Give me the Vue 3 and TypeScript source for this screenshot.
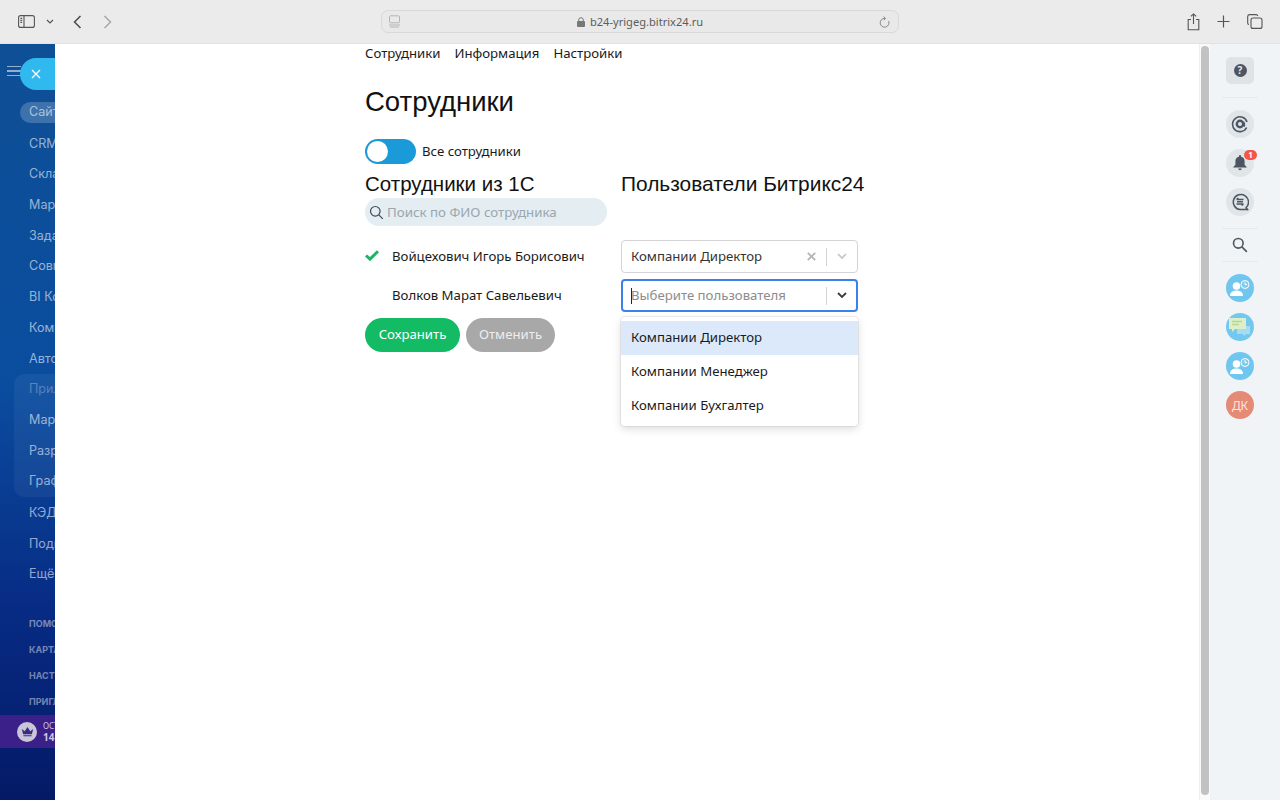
<script setup lang="ts">
const groupA: string[] = ['CRM', 'Склад', 'Маркетинг', 'Задачи', 'Совместная', 'BI Конструктор', 'Компания', 'Автоматизация']
const groupB: string[] = ['Маркет', 'Разработчикам', 'Графики']
const groupC: string[] = ['КЭДО', 'Подписка', 'Ещё...']
const smalls: string[] = ['ПОМОЩЬ', 'КАРТА САЙТА', 'НАСТРОИТЬ', 'ПРИГЛАСИТЬ']
const options: string[] = ['Компании Директор', 'Компании Менеджер', 'Компании Бухгалтер']
</script>

<template>
  <div class="window">
    <header class="toolbar">
      <div class="tb-left">
        <svg width="17" height="13" viewBox="0 0 17 13" fill="none" stroke="#555" stroke-width="1.1"><rect x=".6" y=".6" width="15.8" height="11.8" rx="2"/><path d="M6 .6v11.8M2.4 3.4h1.8M2.4 5.4h1.8M2.4 7.4h1.8"/></svg>
        <svg class="tb-caret" width="8" height="5" viewBox="0 0 8 5" fill="none" stroke="#555" stroke-width="1.2"><path d="M1 1l3 3 3-3"/></svg>
        <svg class="tb-back" width="9" height="14" viewBox="0 0 9 14" fill="none" stroke="#4a4a4a" stroke-width="1.5"><path d="M7.5 1L1.5 7l6 6"/></svg>
        <svg class="tb-fwd" width="9" height="14" viewBox="0 0 9 14" fill="none" stroke="#a8a8a8" stroke-width="1.5"><path d="M1.5 1l6 6-6 6"/></svg>
      </div>
      <div class="address">
        <svg class="addr-site" width="13" height="13" viewBox="0 0 13 13" fill="none" stroke="#b4b4b4" stroke-width="1"><rect x="1.5" y=".8" width="10" height="7" rx="1"/><path d="M1 10h11M2 12h9"/></svg>
        <span class="addr-url">
          <svg width="8" height="10" viewBox="0 0 8 10"><path d="M1.7 4.4V3a2.3 2.3 0 014.6 0v1.4" fill="none" stroke="#777" stroke-width="1"/><rect y="4" width="8" height="6" rx="1" fill="#777"/></svg>
          b24-yrigeg.bitrix24.ru
        </span>
        <svg class="addr-reload" width="11" height="12" viewBox="0 0 11 12" fill="none" stroke="#8a8a8a" stroke-width="1"><path d="M9.6 5a4.4 4.4 0 11-3.6-2.6"/><path d="M4.6.6L6.6 2.4 4.8 4.2"/></svg>
      </div>
      <div class="tb-right">
        <svg width="13" height="18" viewBox="0 0 13 18" fill="none" stroke="#555" stroke-width="1.1"><path d="M4 6.5H1.2v10.3h10.6V6.5H9M6.5 11V1M3.8 3.4L6.5.9l2.7 2.5"/></svg>
        <svg width="13" height="13" viewBox="0 0 13 13" fill="none" stroke="#555" stroke-width="1.2"><path d="M6.5.5v12M.5 6.5h12"/></svg>
        <svg width="16" height="15" viewBox="0 0 16 15" fill="none" stroke="#555" stroke-width="1.1"><rect x="4" y="4" width="11" height="10.4" rx="2"/><path d="M2 10.5A1.5 1.5 0 01.7 9V2.5A2 2 0 012.7.6H9A1.8 1.8 0 0110.8 2"/></svg>
      </div>
    </header>

    <div class="body">
      <aside class="sidebar">
        <span class="burger"><i></i><i></i><i></i></span>
        <button class="close-pill" type="button" aria-label="Закрыть">
          <svg width="10" height="10" viewBox="0 0 10 10" stroke="#fff" stroke-width="1.4"><path d="M1 1l8 8M9 1l-8 8"/></svg>
        </button>
        <div class="menu">
          <div class="item active"><span>Сайты</span></div>
          <div v-for="t in groupA" :key="t" class="item"><span>{{ t }}</span></div>
          <div class="group">
            <div class="item dim"><span>Приложения</span></div>
            <div v-for="t in groupB" :key="t" class="item"><span>{{ t }}</span></div>
          </div>
          <div v-for="t in groupC" :key="t" class="item"><span>{{ t }}</span></div>
        </div>
        <div class="smalls">
          <div v-for="t in smalls" :key="t" class="small">{{ t }}</div>
        </div>
        <div class="promo">
          <span class="crown">
            <svg width="16" height="13" viewBox="0 0 16 13" fill="#3b2a86"><path d="M1 3.5l3.6 2.8L8 1l3.4 5.3L15 3.5 13.4 10H2.6zM3 11h10v1.4H3z"/></svg>
          </span>
          <span class="promo-text"><small>ОСТАЛОСЬ</small><b>14 дней</b></span>
        </div>
      </aside>

      <main class="main">
        <div class="content">
          <nav class="tabs">
            <span>Сотрудники</span><span>Информация</span><span>Настройки</span>
          </nav>
          <h1>Сотрудники</h1>
          <div class="toggle-row">
            <span class="toggle"><i></i></span>
            <span>Все сотрудники</span>
          </div>
          <div class="columns">
            <section class="col-left">
              <h2>Сотрудники из 1С</h2>
              <div class="search">
                <svg width="15" height="15" viewBox="0 0 15 15" fill="none" stroke="#3d4a52" stroke-width="1.2"><circle cx="6.3" cy="6.3" r="4.8"/><path d="M9.8 9.8l4 4"/></svg>
                <span>Поиск по ФИО сотрудника</span>
              </div>
              <div class="person first">
                <svg class="check" width="14" height="11" viewBox="0 0 14 11" fill="none" stroke="#1eb463" stroke-width="3"><path d="M1 5.5l4 3.6L13 1.2"/></svg>
                <span>Войцехович Игорь Борисович</span>
              </div>
              <div class="person">
                <span>Волков Марат Савельевич</span>
              </div>
            </section>
            <section class="col-right">
              <h2>Пользователи Битрикс24</h2>
              <div class="select filled">
                <span class="value">Компании Директор</span>
                <svg class="clear" width="9" height="9" viewBox="0 0 9 9" stroke="#b5b5b5" stroke-width="1.8"><path d="M.8.8l7.4 7.4M8.2.8L.8 8.2"/></svg>
                <i class="sep"></i>
                <svg class="arrow" width="10" height="7" viewBox="0 0 10 7" fill="none" stroke="#c4c4c4" stroke-width="1.6"><path d="M1 1l4 4 4-4"/></svg>
              </div>
              <div class="select focus">
                <i class="caret"></i>
                <span class="placeholder">Выберите пользователя</span>
                <i class="sep"></i>
                <svg class="arrow" width="10" height="7" viewBox="0 0 10 7" fill="none" stroke="#3c3c3c" stroke-width="1.8"><path d="M1 1l4 4 4-4"/></svg>
                <ul class="dropdown">
                  <li v-for="(o, i) in options" :key="o" :class="{ hot: i === 0 }">{{ o }}</li>
                </ul>
              </div>
            </section>
          </div>
          <div class="actions">
            <button class="btn save" type="button">Сохранить</button>
            <button class="btn cancel" type="button">Отменить</button>
          </div>
        </div>
      </main>

      <div class="scrolltrack"><div class="thumb"></div></div>

      <aside class="rail">
        <div class="help">
          <span class="help-dot">?</span>
        </div>
        <hr />
        <div class="round">
          <svg width="18" height="18" viewBox="0 0 18 18" fill="none" stroke="#4d5563" stroke-width="1.6"><path d="M15.6 12.5A7.4 7.4 0 1116 7"/><circle cx="9" cy="9" r="3.2" stroke-width="2.4"/><path d="M12.5 6.5a5 5 0 01.6 5.2" stroke-width="1.2"/></svg>
        </div>
        <div class="round">
          <svg width="14" height="16" viewBox="0 0 14 16" fill="#4d5563"><path d="M7 0a1 1 0 011 1v.7A4.6 4.6 0 0111.6 6.200v3.6L14 12.500H0l2.400-2.700V6.200A4.600 4.600 0 016 1.700V1a1 1 0 011-1zM5.200 13.500h3.600a1.800 1.800 0 01-3.600 0z"/></svg>
          <span class="badge">1</span>
        </div>
        <div class="round">
          <svg width="18" height="18" viewBox="0 0 18 18" fill="none" stroke="#4d5563" stroke-width="1.5"><path d="M16.800 16.800L15 14.700A7.600 7.600 0 109 16.600h7.800z" stroke-linejoin="round"/><path d="M5.500 6.500h7M5.500 6.500L7.300 5M12.500 11h-7M12.500 11l-1.800 1.500M6 8.700h6"/></svg>
        </div>
        <hr />
        <div class="round plain">
          <svg width="16" height="16" viewBox="0 0 16 16" fill="none" stroke="#4d5563" stroke-width="1.600"><circle cx="6.300" cy="6.300" r="4.800"/><path d="M9.900 9.900l5 5"/></svg>
        </div>
        <hr />
        <div class="round user">
          <svg width="22" height="18" viewBox="0 0 22 18"><circle cx="7.500" cy="7" r="3.800" fill="#fff"/><path d="M1 17c0-4 3-5.500 6.500-5.500S14 13 14 17z" fill="#fff"/><circle cx="16" cy="5.500" r="4" fill="#7dcdf0" stroke="#fff"/><path d="M16 3.300v2.200h2" fill="none" stroke="#fff"/></svg>
        </div>
        <div class="round chat">
          <svg width="24" height="20" viewBox="0 0 24 20"><path d="M9 9h13v8H18l-2 2-1-2H9z" fill="#a6dcf2"/><path d="M1 1h17v11H7l-3 3v-3H1z" fill="#dcefc9"/><path d="M4 4.500h10M4 7.500h7" stroke="#b9d68e" stroke-width="1.600"/></svg>
        </div>
        <div class="round user">
          <svg width="22" height="18" viewBox="0 0 22 18"><circle cx="7.500" cy="7" r="3.800" fill="#fff"/><path d="M1 17c0-4 3-5.500 6.500-5.500S14 13 14 17z" fill="#fff"/><circle cx="16" cy="5.500" r="4" fill="#7dcdf0" stroke="#fff"/><path d="M16 3.300v2.200h2" fill="none" stroke="#fff"/></svg>
        </div>
        <div class="round avatar">ДК</div>
      </aside>
    </div>
  </div>
</template>

<style>
html, body { margin: 0; background: #fff; overflow: hidden; }
</style>

<style scoped>
.window { width: 1280px; height: 800px; display: flex; flex-direction: column; overflow: hidden; font-family: "Noto Sans", "Open Sans", sans-serif; color: #1a1a1a; }
.toolbar { height: 44px; flex: none; background: #ebebeb; border-bottom: 1px solid #e2e2e2; box-sizing: border-box; display: flex; align-items: center; position: relative; padding: 0 17px 0 18px; justify-content: space-between; }
.tb-left { display: flex; align-items: center; }
.tb-caret { margin-left: 11px; }
.tb-back { margin-left: 19px; }
.tb-fwd { margin-left: 21px; }
.address { width: 518px; height: 23px; box-sizing: border-box; border: 1px solid #d9d9d9; border-radius: 7px; background: #e9e9e9; display: flex; align-items: center; justify-content: space-between; padding: 0 8px 0 6px; margin-left: 269px; font-size: 11.1px; color: #5c5c5c; }
.addr-url { display: flex; align-items: center; gap: 5px; margin-left: 0; }
.tb-right { display: flex; align-items: center; gap: 17px; margin-left: auto; margin-right: 0; }
.body { flex: 1; display: flex; min-height: 0; }
.sidebar { width: 55px; flex: none; position: relative; overflow: hidden; box-sizing: border-box; padding-top: 54px; background: linear-gradient(180deg, #0e4f95 0%, #0a4d9f 45%, #072b84 75%, #041a66 100%); display: flex; flex-direction: column; }
.burger { position: absolute; left: 7px; top: 22px; width: 14px; display: flex; flex-direction: column; gap: 3px; }
.burger i { display: block; height: 1.4px; background: rgba(255,255,255,.55); }
.close-pill { position: absolute; left: 20px; top: 14px; width: 40px; height: 32px; border: 0; border-radius: 16px 0 0 16px; background: #2fb9ee; display: flex; align-items: center; padding: 0 0 0 11px; }
.menu { display: flex; flex-direction: column; }
.item { height: 30.7px; line-height: 30.700px; padding-left: 29px; font-size: 12.6px; color: rgba(255,255,255,.58); white-space: nowrap; font-family: Inter, "Noto Sans", sans-serif; }
.item.active { position: relative; }
.item.active::before { content: ""; position: absolute; left: 20px; top: 4px; width: 60px; height: 21px; border-radius: 11px; background: rgba(255,255,255,.2); }
.item.active span { position: relative; top: -1px; }
.item.dim { color: rgba(255,255,255,.28); }
.group { margin: 0 0 1px 14px; padding: 0; border-radius: 10px 0 0 10px; background: rgba(255,255,255,.05); }
.group .item { padding-left: 15px; }
.smalls { margin-top: 21px; display: flex; flex-direction: column; }
.small { height: 26px; line-height: 26px; padding-left: 29px; font-size: 9px; font-weight: 700; color: rgba(255,255,255,.45); white-space: nowrap; font-family: Inter, sans-serif; }
.promo { margin-top: 0; height: 33px; background: #3a2088; display: flex; align-items: center; padding-left: 17px; }
.crown { width: 20px; height: 20px; border-radius: 50%; background: #c9c6d8; flex: none; display: flex; align-items: center; justify-content: center; }
.crown svg { width: 13px; height: 11px; }
.promo-text { margin-left: 6px; display: flex; flex-direction: column; color: rgba(255,255,255,.75); white-space: nowrap; }
.promo-text small { font-size: 8px; line-height: 10px; }
.promo-text b { font-size: 10px; line-height: 12px; }
.main { flex: 1; min-width: 0; background: #fff; overflow: hidden; }
.content { margin-left: 310px; width: 520px; font-size: 13.2px; }
.tabs { display: flex; gap: 14px; font-size: 13.2px; line-height: 19px; height: 20px; color: #1a1a1a; }
h1 { margin: 21px 0 0 0; font: 400 27.5px/34px "Liberation Sans", Arial, sans-serif; color: #111; height: 34px; }
.toggle-row { margin-top: 20px; height: 24px; display: flex; align-items: center; gap: 6px; font-size: 13.2px; }
.toggle { width: 51px; height: 25px; border-radius: 13px; background: #1b9ad9; position: relative; flex: none; }
.toggle i { position: absolute; left: 2px; top: 2px; width: 21px; height: 21px; border-radius: 50%; background: #fff; }
.columns { display: flex; gap: 14px; margin-top: 7px; }
h2 { margin: 0; font: 400 20.5px/28px "Liberation Sans", Arial, sans-serif; color: #111; white-space: nowrap; }
.col-right h2 { font-size: 20.9px; }
.col-left { width: 242px; flex: none; }
.col-right { width: 237px; flex: none; }
.search { height: 28px; border-radius: 14px; background: #e3edf2; display: flex; align-items: center; gap: 3px; padding-left: 4px; font-size: 13.3px; color: #9aa7ae; }
.person { height: 39px; display: flex; align-items: center; padding-left: 27px; position: relative; font-size: 13.2px; white-space: nowrap; }
.person.first { margin-top: 10px; }
.check { position: absolute; left: 0; top: 14px; }
.select { height: 33px; box-sizing: border-box; border: 1px solid #d4d4d4; border-radius: 4px; display: flex; align-items: center; padding: 0 10px 0 9px; font-size: 13.2px; position: relative; margin-top: 6px; }
.select.filled { margin-top: 42px; color: #333; }
.select.focus { border: 2px solid #3b82e8; padding: 0 9px 0 8px; }
.value, .placeholder { flex: 1; white-space: nowrap; margin-top: -2px; }
.placeholder { color: #8c8c8c; margin-left: -1px; }
.caret { width: 1px; height: 16px; background: #222; flex: none; }
.clear { margin-right: 10px; }
.sep { width: 1px; height: 18px; background: #d4d4d4; flex: none; margin-right: 10px; }
.dropdown { position: absolute; z-index: 2; left: -2px; top: 36px; width: 237px; box-sizing: border-box; margin: 0; padding: 4px 0 3px; list-style: none; background: #fff; border-radius: 4px; box-shadow: 0 0 0 1px rgba(0,0,0,.06), 0 3px 8px rgba(0,0,0,.14); }
.dropdown li { height: 34px; line-height: 33px; padding-left: 10px; font-size: 13.2px; color: #1a1a1a; }
.dropdown li.hot { background: #dbe9fb; }
.actions { display: flex; gap: 6px; margin-top: 4px; }
.btn { height: 34px; border: 0; border-radius: 17px; color: #fff; font: 13.2px "Noto Sans", sans-serif; padding: 0 0 2px; }
.save { width: 95px; background: #12bb64; }
.cancel { width: 89px; background: #a8a8a8; color: #eee; }
.scrolltrack { width: 11px; flex: none; background: #fafafa; border-left: 1px solid #eee; box-sizing: border-box; padding: 2px 1px 5px 1px; }
.thumb { height: 100%; background: #c2c2c2; border-radius: 4px; }
.rail { width: 70px; flex: none; background: #f0f4f7; display: flex; flex-direction: column; align-items: center; padding: 13px 10px 0 0; box-sizing: border-box; }
.help { width: 28px; height: 27px; border-radius: 5px; background: #dfe3e6; display: flex; align-items: center; justify-content: center; }
.help-dot { width: 13px; height: 13px; border-radius: 50%; background: #4d5563; color: #e6e9ec; font: 700 10px/13px "Noto Sans", sans-serif; text-align: center; }
hr { width: 36px; margin: 0; height: 1px; border: 0; background: #e6eaee; flex: none; }
.rail hr:nth-of-type(1) { margin: 13px 0 12px; }
.rail hr:nth-of-type(2) { margin: 1px 0 0; }
.rail hr:nth-of-type(3) { margin: 0 0 12px; }
.round { width: 28px; height: 28px; border-radius: 50%; background: #e0e5e8; display: flex; align-items: center; justify-content: center; position: relative; flex: none; margin-bottom: 11px; }
.round.plain { background: transparent; height: 32px; margin: 0; }
.badge { position: absolute; left: 18px; top: 1px; width: 13px; height: 10px; border-radius: 5px; background: #f4574a; color: #fff; font: 700 8px/10px "Noto Sans", sans-serif; text-align: center; }
.user { background: #70c6ee; }
.chat { background: #74c8ee; }
.avatar { background: #e58a75; color: #fbe6df; font-size: 12px; }
</style>
